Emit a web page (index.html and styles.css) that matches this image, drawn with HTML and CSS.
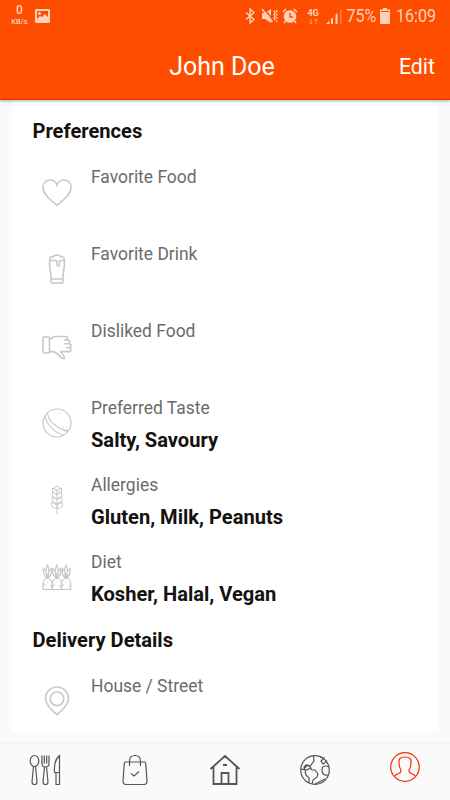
FILE: index.html
```html
<!DOCTYPE html>
<html lang="en">
  <head>
    <meta charset="utf-8">
    <title>John Doe</title>
    <meta name="viewport" content="width=device-width, initial-scale=1">
    <link rel="stylesheet" href="styles.css">
  </head>
  <body>
    <header class="header">
      <div class="status">
        <div class="speed"><b>0</b><span>KB/s</span></div>
        <svg class="photo" width="15" height="14" viewBox="0 0 15 14">
          <path fill-rule="evenodd" d="M1 0h13l1 1v12l-1 1H1l-1-1V1zM2 2v8l3-3 2 1 3-3 3 3V2z"/>
          <circle cx="4.500" cy="4.500" r="1.500"/>
        </svg>
        <div class="status-right">
          <svg class="bluetooth" width="11" height="16" viewBox="0 0 11 16">
            <path class="line" d="M1 4.500l8 7-4 3.500V1l4 3.500-8 7"/>
          </svg>
          <svg class="mute" width="17" height="16" viewBox="0 0 17 16">
            <path d="M1 5h3l6-4v14l-6-4H1z"/>
            <path class="cut" d="M2.500 0l10.500 13"/>
            <path class="line" d="M1 1l10.500 13"/>
            <path class="line" d="M13 2.500l1.200 2-1.200 2 1.200 2-1.200 2 1.200 2"/>
            <path class="line" d="M15.800 2v12" stroke-dasharray="2 1.500"/>
          </svg>
          <svg class="alarm" width="16" height="16" viewBox="0 0 16 16">
            <circle cx="8" cy="8.500" r="6.300"/>
            <path class="line" d="M1 4l3-3M12 1l3 3M3.500 13L2 15M12.500 13l1.500 2"/>
            <path class="hand" d="M8 5v4h3"/>
          </svg>
          <div class="network"><b>4G</b><svg width="9" height="5" viewBox="0 0 9 5"><path d="M2 0v5M.5 3.500L2 5l1.500-1.500M7 5V0M5.500 1.500L7 0l1.500 1.500"/></svg></div>
          <svg class="signal" width="16" height="15" viewBox="0 0 16 15">
            <path d="M0 15l3.500-3.500V15zM5 10l2-1.500V15H5zM9.500 6l2-2v11h-2z"/>
            <path opacity=".4" d="M14 1.500L15.500 0v15H14z"/>
          </svg>
          <span class="percent">75%</span>
          <svg class="battery" width="10" height="16" viewBox="0 0 10 16">
            <path d="M3 0h4v1.500h3V16H0V1.500h3z"/>
            <path class="level" d="M1 3.500h8"/>
          </svg>
          <span class="clock">16:09</span>
        </div>
      </div>
      <div class="toolbar">
        <h1>John Doe</h1>
        <a class="edit">Edit</a>
      </div>
    </header>

    <main class="card">
      <h2>Preferences</h2>
      <div class="row">
        <svg class="icon" viewBox="0 0 30 30">
          <path d="M15 28.200C8 22.500 1 17.500 1 10.200 1 6 4 3 8 3c3.500 0 6 2 7 5 1-3 3.500-5 7-5 4 0 7 3 7 7.200 0 7.300-7 12.300-14 18z"/>
        </svg>
        <div><p class="label">Favorite Food</p></div>
      </div>
      <div class="row">
        <svg class="icon" viewBox="0 0 30 30">
          <path d="M8.500 6.500c-2-2 0-4.500 2.500-3.500 1-2.500 7-2.500 8 0 2.500-1 4.500 1.500 2.500 3.500M8 5c-1.500 6 .7 11 1 18v5q0 1 1 1h10q1 0 1-1v-5c.3-7 2.500-12 1-18M8.500 6.500H14q1 0 1 1v3.500q0 1 1.200 1t1.200-1V8q0-1.500 1.300-1.500h3M9 25h12"/>
        </svg>
        <div><p class="label">Favorite Drink</p></div>
      </div>
      <div class="row">
        <svg class="icon" viewBox="0 0 30 30">
          <rect x="1" y="6" width="6.500" height="16" rx="1"/>
          <path d="M7.500 7.500H10Q11 5.500 13 5.500h10.500q2 0 2 1.800T23.500 9h-1.800 4q2 0 2 1.900t-2 1.900h-3.200 4.500q2 0 2 2t-2 2h-3.200H27q2 0 2 1.900t-2 1.900h-8.200l3 4.300q1.500 2.500-.5 2.500-1.200 0-2-.8-4.300-4.800-8.300-6H7.500"/>
        </svg>
        <div><p class="label">Disliked Food</p></div>
      </div>
      <div class="row">
        <svg class="icon thin" viewBox="0 0 30 30">
          <circle cx="15" cy="15" r="14"/>
          <path d="M3 8c1 8 11 18 19 19M5.500 5.500C7 13 16 22.500 26 22.500M16.500 5.500h1M21 19.500h1M24 19.500h1M22 22.500l3 1"/>
        </svg>
        <div>
          <p class="label">Preferred Taste</p>
          <p class="value">Salty, Savoury</p>
        </div>
      </div>
      <div class="row">
        <svg class="icon wheat" viewBox="0 0 30 30">
          <path d="M15 4v25.500M12.800 2v3l2.200 1.500L17.200 5V2L15 1zM10.500 3v3.500L15 9.500l4.500-3V3M10.500 3l2 1M19.500 3l-2 1M10.300 7v4L15 14l4.700-3V7M10.300 7L15 9.500 19.700 7M10.300 12v4L15 19l4.700-3v-4M10.300 12l4.700 2.500 4.700-2.500M9.500 17.500v2q0 3.500 5.500 4 5.500-.5 5.500-4v-2q-4.500 0-5.500 4-1-4-5.500-4z"/>
        </svg>
        <div>
          <p class="label">Allergies</p>
          <p class="value">Gluten, Milk, Peanuts</p>
        </div>
      </div>
      <div class="row">
        <svg class="icon thin" viewBox="0 0 30 30">
          <defs>
            <g id="carrot">
              <path d="M1 27.500v-4.500c0-4 2-6.500 4.700-6.500s4.500 2.500 4.500 6.500v4.500M5.500 16.500Q2.500 9 5.500 3 8.500 9 5.500 16.500M5.500 16.500Q5 9 1.500 6.500 .5 13 5.500 16.500M5.500 16.500Q6 9 9.500 6.500q1 6.500-4 10M1 23h2.500M8 24h2M5 20h1"/>
            </g>
          </defs>
          <use href="#carrot"/>
          <use href="#carrot" x="9.300"/>
          <use href="#carrot" x="18.600"/>
          <path d="M1 27.500h28"/>
        </svg>
        <div>
          <p class="label">Diet</p>
          <p class="value">Kosher, Halal, Vegan</p>
        </div>
      </div>
      <h2 class="second">Delivery Details</h2>
      <div class="row">
        <svg class="icon" viewBox="0 0 30 30">
          <path d="M15 28.500Q3.500 19.500 3.500 12.500a11.500 11.500 0 0 1 23 0Q26.500 19.500 15 28.500z"/>
          <circle cx="15" cy="12.800" r="6.800"/>
        </svg>
        <div><p class="label">House / Street</p></div>
      </div>
    </main>

    <nav class="tabs">
      <a>
        <svg viewBox="0 0 32 32">
          <ellipse cx="5.500" cy="7" rx="4.300" ry="5.500"/>
          <path d="M4.500 12.500L3 28q0 2.500 2.500 2.500T8 28L6.500 12.500M13 1.500v8q0 3.500 3.500 3.500T20 9.500v-8M15.300 1.500v8M17.700 1.500v8M15.500 13L14 28q0 2.500 2.500 2.500T19 28l-1.500-15M30.500 1.500v17h-5q-1-12 5-17zM27 18.500v12h3.500v-12"/>
        </svg>
      </a>
      <a>
        <svg viewBox="0 0 32 32">
          <path d="M6.500 8h19q1 0 1.200 1l1.300 18q0 3.500-3 3.500H7q-3 0-3-3.500L5.300 9q.2-1 1.200-1zM10.500 12V7q0-5.500 5.500-5.500T21.500 7v5M12 19.500l3 2.500 5-4.500"/>
        </svg>
      </a>
      <a>
        <svg class="home" viewBox="0 0 32 32">
          <path d="M1.500 15L16 2l14.500 13M4.500 12.500V30h23V12.500M12.500 30V19h7v11M14 11h4"/>
        </svg>
      </a>
      <a>
        <svg class="globe" viewBox="0 0 32 32">
          <circle cx="16" cy="16" r="14.300"/>
          <path d="M14.500 2l.5 5-3 4-3 1-2-1-2 2 1 3-4-1M3 15l5 1 3-2 2 2h3l3 4-1 3-4 3-1 4M6 17l1 4 3 3v5M6 14l2-3 3 1 1 3M21 3l4 1-3 3 2 3 3-2v-2M30 13q-7-3-7 3 0 6 6 5M16 30l4-2 6-3"/>
        </svg>
      </a>
      <a class="active">
        <svg viewBox="0 0 32 32">
          <circle cx="16" cy="16" r="14.300"/>
          <path d="M5.500 25.500q1-2 4-3 3-1 2.500-3.500-2-3-2-7Q9 6 16 6t6 6q0 4-2 7-.5 2.500 2.500 3.500 3 1 4 3"/>
        </svg>
      </a>
    </nav>
  </body>
</html>
```

FILE: styles.css
```css
* {
  box-sizing: border-box;
}
body {
  margin: 0;
  height: 100vh;
  display: flex;
  flex-direction: column;
  overflow: hidden;
  background: #fafafa;
  font-family: Roboto, sans-serif;
}
h1, h2, p {
  margin: 0;
}

/* Header */
.header {
  position: relative;
  height: 100px;
  flex: none;
  background: #ff4d00;
  border-bottom: 1px solid #f22b00;
  box-shadow: 0 1px 3px rgba(0, 60, 60, 0.4);
  color: #fff;
}
.status {
  height: 32px;
  padding: 0 14px 0 10px;
  display: flex;
  align-items: center;
  color: #ffd0ba;
  fill: #ffd0ba;
}
.speed {
  width: 19px;
  display: flex;
  flex-direction: column;
  align-items: center;
}
.speed b {
  font-size: 12px;
  line-height: 14px;
  font-weight: 500;
}
.speed span {
  margin-bottom: 3px;
  font-weight: 500;
  font-size: 7.5px;
  line-height: 9px;
}
.speed, .photo {
  margin-top: -1px;
}
.photo {
  margin-left: 6px;
}
.status-right {
  flex: 1;
  display: flex;
  justify-content: flex-end;
  align-items: center;
}
.line {
  fill: none;
  stroke: #ffd0ba;
  stroke-width: 1.4;
}
.cut, .hand, .level {
  fill: none;
  stroke: #ff4d00;
  stroke-width: 1.5;
}
.level {
  stroke-width: 1;
}
.mute {
  margin-left: 5px;
}
.alarm {
  margin-left: 4px;
}
.network {
  width: 13px;
  margin: 0 6px 0 9px;
  text-align: center;
  font-size: 9px;
  line-height: 9px;
}
.network svg {
  display: block;
  margin: 1px auto 0;
  fill: none;
  stroke: #ff9a6c;
}
.percent, .clock {
  font-size: 18.5px;
  line-height: 20px;
  transform: scaleX(0.87);
  transform-origin: right;
}
.percent {
  margin: 0 4px 0 0;
}
.clock {
  margin-left: 0;
}
.toolbar {
  height: 68px;
  padding: 0 15px;
  display: grid;
  grid-template-columns: 1fr auto 1fr;
  align-items: center;
}
.toolbar h1 {
  grid-column: 2;
  margin-right: 6px;
  font-size: 25px;
  font-weight: 400;
}
.edit {
  justify-self: end;
  font-size: 21.3px;
}

/* Profile card */
.card {
  height: 632px;
  margin: 0 12px;
  padding: 19px 20.5px 0;
  background: #fff;
}
.card h2 {
  height: 45.8px;
  font-size: 20.1px;
  line-height: 24px;
  font-weight: 700;
  color: #15110e;
}
.row {
  height: 77.1px;
  display: flex;
  gap: 19.5px;
  padding-left: 9px;
}
.card .second {
  margin-top: 1px;
}
.icon {
  width: 30px;
  height: 30px;
  margin-top: 12px;
  flex: none;
  fill: none;
  stroke: #c8c8c8;
  stroke-width: 1.6;
}
.thin {
  stroke-width: 1.2;
}
.wheat {
  stroke-width: 1;
}
.label {
  font-size: 17.45px;
  line-height: 24px;
  color: #6b6b6b;
}
.value {
  margin-top: 7.6px;
  font-size: 20.1px;
  line-height: 24px;
  font-weight: 700;
  color: #15110e;
}

/* Bottom tabs */
.tabs {
  height: 58px;
  margin-top: auto;
  display: grid;
  grid-template-columns: repeat(5, 1fr);
  border-top: 2px solid #f3f3f3;
}
.tabs a {
  display: flex;
  justify-content: center;
}
.tabs svg {
  width: 32px;
  height: 32px;
  margin-top: 9.5px;
  fill: none;
  stroke: #555;
  stroke-width: 1.2;
}
.tabs .home {
  stroke-width: 1.8;
}
.tabs .active svg {
  margin-top: 7px;
  stroke: #ff2a00;
}
```
